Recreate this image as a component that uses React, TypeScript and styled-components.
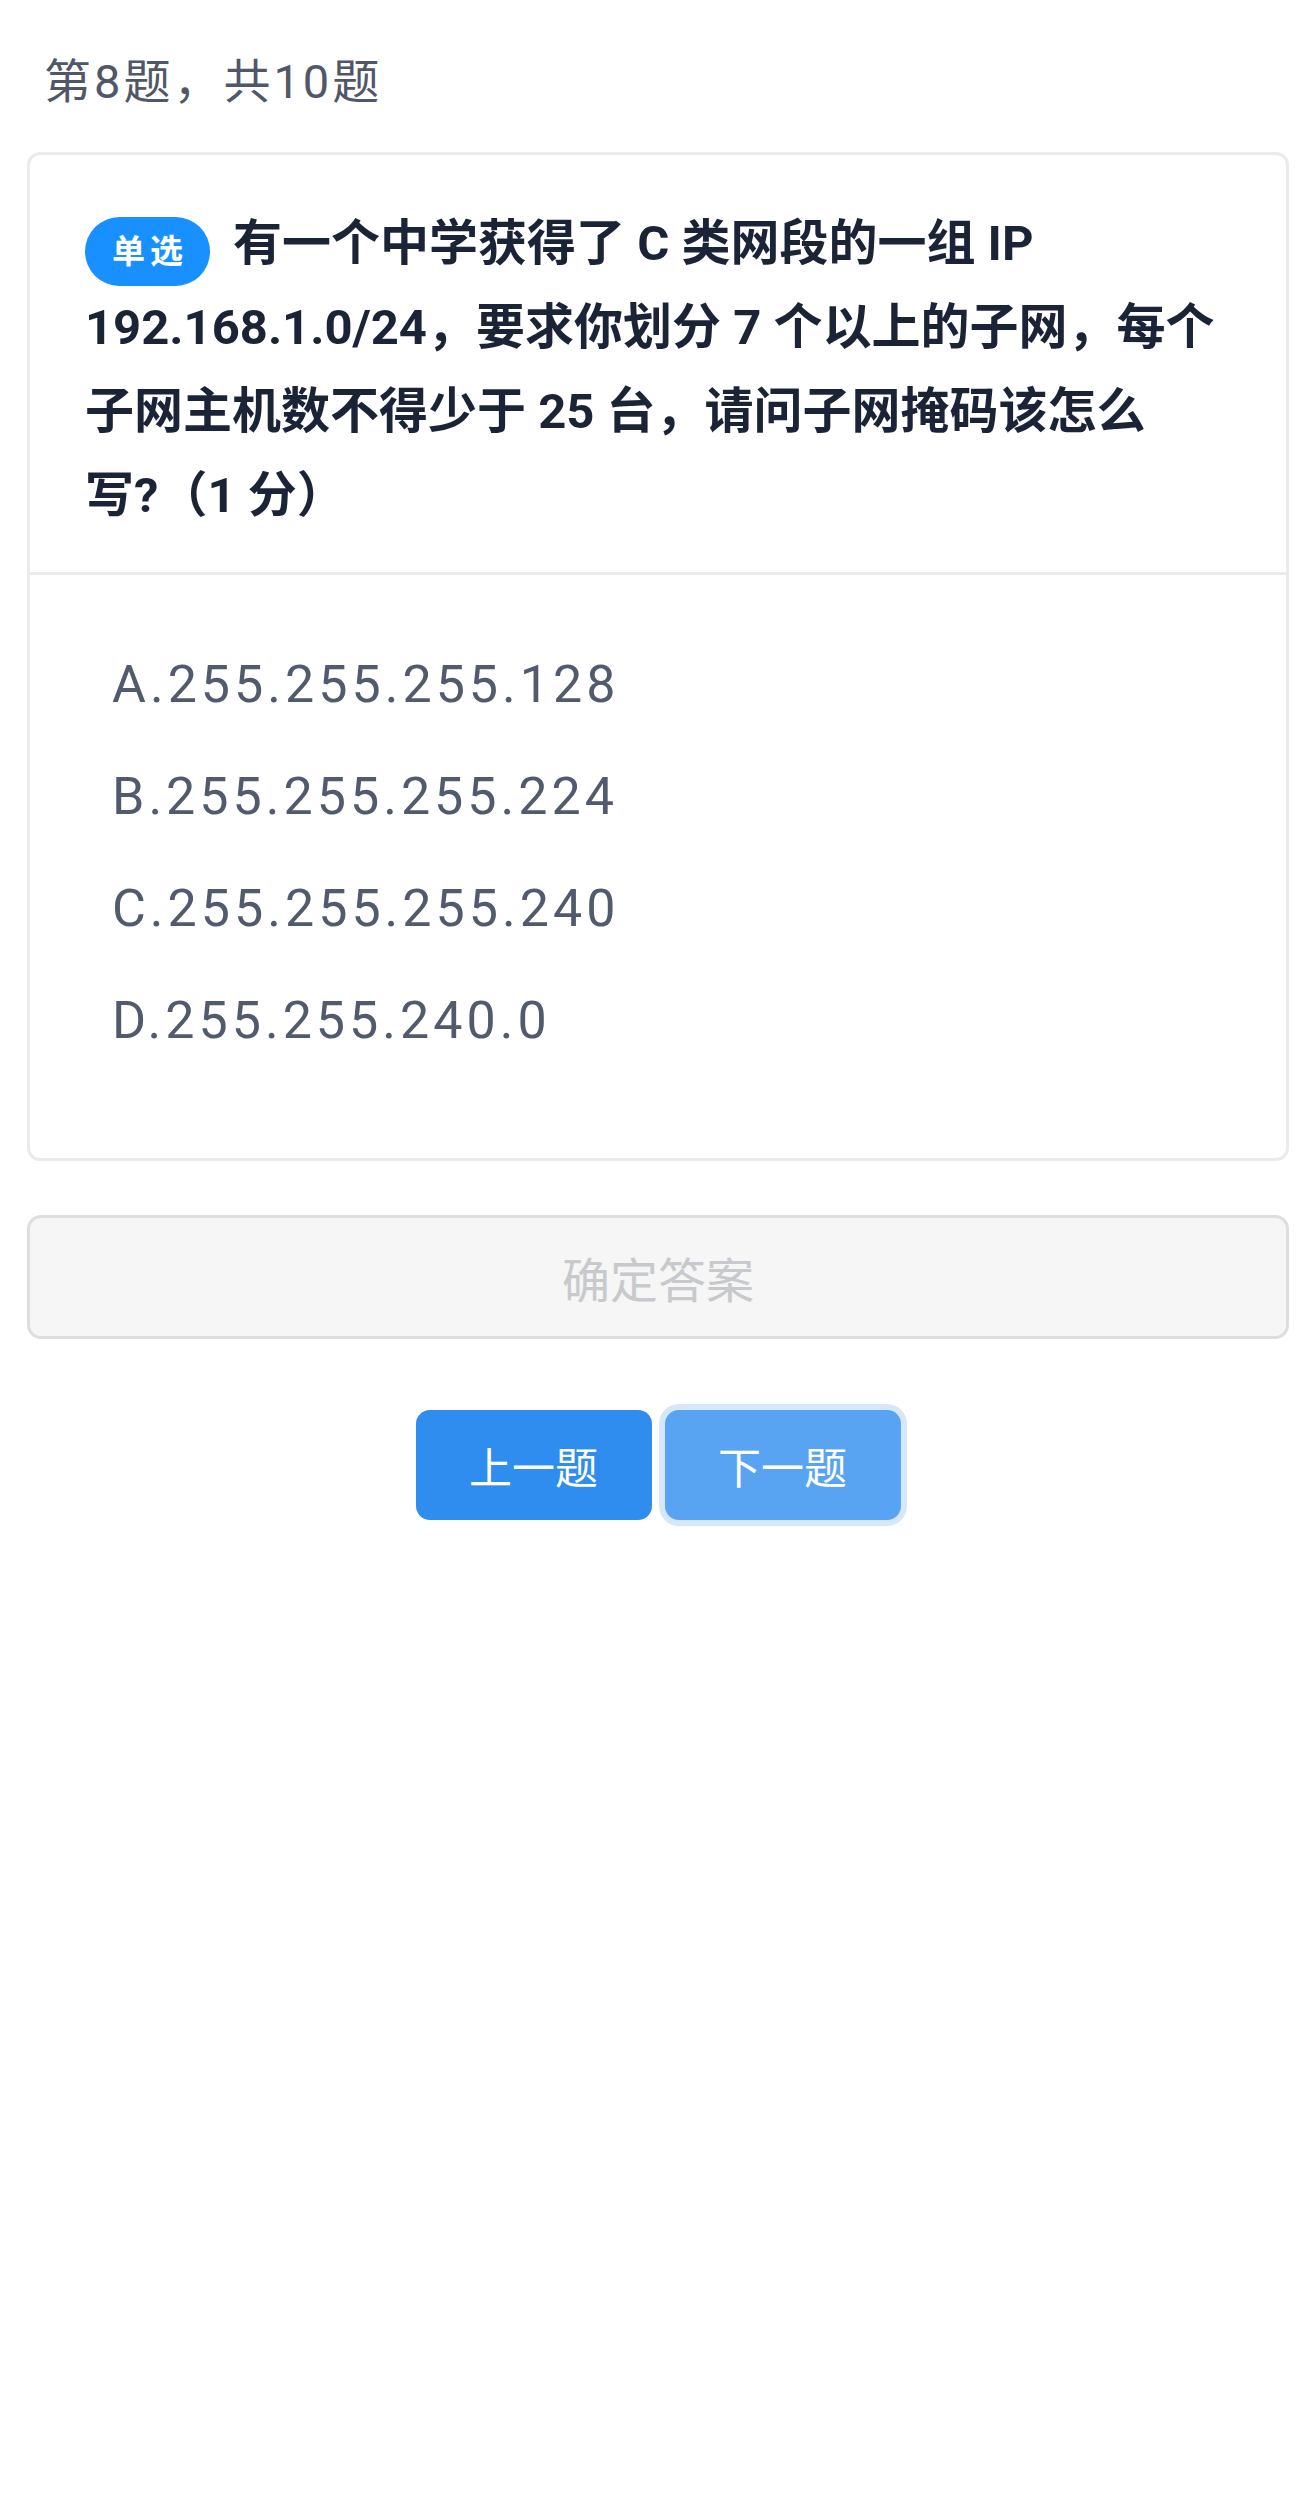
import React from "react";
import styled, { createGlobalStyle } from "styled-components";

const GlobalStyle = createGlobalStyle`
  html, body {
    margin: 0;
    padding: 0;
    background: #ffffff;
  }
  body {
    font-family: Roboto, "Noto Sans CJK SC", sans-serif;
    -webkit-font-smoothing: antialiased;
  }
`;

const Page = styled.div`
  display: flex;
  flex-direction: column;
  padding: 0 27px 80px;
  min-height: 2518px;
  box-sizing: border-box;
`;

const Progress = styled.div`
  padding: 50px 0 0 17px;
  font-size: 47px;
  line-height: 64px;
  color: #505769;
  letter-spacing: 3px;
`;

const Card = styled.section`
  margin-top: 38px;
  border: 3px solid #ebebeb;
  border-radius: 13px;
  background: #ffffff;
  display: flex;
  flex-direction: column;
`;

const QuestionHead = styled.div`
  padding: 47px 52px 34px 55px;
  border-bottom: 3px solid #ebebeb;
`;

const QuestionText = styled.p`
  margin: 0;
  font-size: 49px;
  line-height: 84px;
  font-weight: 700;
  color: #1b2337;
`;

const NoBreak = styled.span`
  white-space: nowrap;
`;

const TypeBadge = styled.span`
  display: inline-flex;
  align-items: center;
  justify-content: center;
  width: 125px;
  height: 69px;
  border-radius: 35px;
  background: #1890ff;
  color: #ffffff;
  font-size: 33px;
  font-weight: 700;
  letter-spacing: 5px;
  text-indent: 5px;
  margin-right: 23px;
  vertical-align: -3px;
  line-height: 1;
`;

const OptionList = styled.ul`
  list-style: none;
  margin: 0;
  padding: 53px 52px 82px;
  display: flex;
  flex-direction: column;
`;

const Option = styled.li`
  height: 112px;
  display: flex;
  align-items: center;
  padding-left: 30px;
  font-size: 52px;
  letter-spacing: 4px;
  color: #525a6d;
`;

const ConfirmButton = styled.button`
  margin-top: 54px;
  height: 124px;
  border: 3px solid #dedee1;
  border-radius: 14px;
  background: #f6f6f6;
  color: #c8c9cc;
  font-family: inherit;
  font-size: 48px;
  cursor: not-allowed;
`;

const NavRow = styled.div`
  margin-top: 71px;
  display: flex;
  justify-content: center;
  gap: 13px;
`;

const NavButton = styled.button<{ $focused?: boolean }>`
  width: 236px;
  height: 110px;
  border: none;
  border-radius: 14px;
  background: ${(p) => (p.$focused ? "#58a4f2" : "#2e8dee")};
  box-shadow: ${(p) => (p.$focused ? "0 0 0 6px #d6e7fb" : "none")};
  color: #ffffff;
  font-family: inherit;
  font-size: 43px;
  cursor: pointer;
`;

const options = [
  "A.255.255.255.128",
  "B.255.255.255.224",
  "C.255.255.255.240",
  "D.255.255.240.0",
];

export default function App() {
  return (
    <>
      <GlobalStyle />
      <Page>
        <Progress>第8题，共10题</Progress>
        <Card>
          <QuestionHead>
            <QuestionText>
              <TypeBadge>单选</TypeBadge>
              有一个中学获得了 C 类网段的一组 IP 192.168.1.0/24，要求你划分 7 个以上的子网，每个子网主机数不得少于 25 台，请问子网掩码该怎么
              <NoBreak>写?（1 分）</NoBreak>
            </QuestionText>
          </QuestionHead>
          <OptionList>
            {options.map((o) => (
              <Option key={o}>{o}</Option>
            ))}
          </OptionList>
        </Card>
        <ConfirmButton disabled>确定答案</ConfirmButton>
        <NavRow>
          <NavButton>上一题</NavButton>
          <NavButton $focused>下一题</NavButton>
        </NavRow>
      </Page>
    </>
  );
}
